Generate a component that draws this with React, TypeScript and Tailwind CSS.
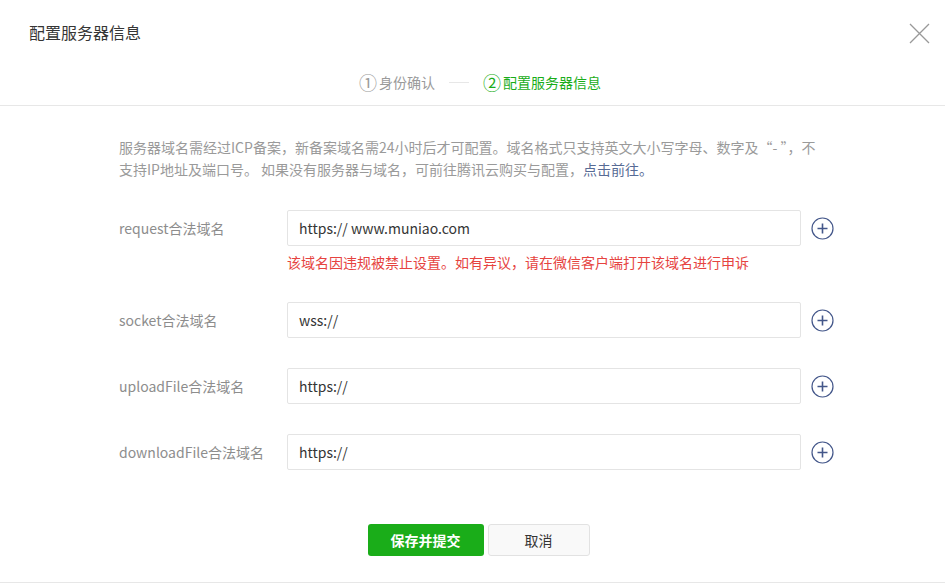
const font = { fontFamily: '"Noto Sans CJK SC", "Noto Sans", sans-serif' };

type Row = {
  label: string;
  value: string;
  error?: string;
};

const rows: Row[] = [
  {
    label: "request合法域名",
    value: "https:// www.muniao.com",
    error: "该域名因违规被禁止设置。如有异议，请在微信客户端打开该域名进行申诉",
  },
  { label: "socket合法域名", value: "wss://" },
  { label: "uploadFile合法域名", value: "https://" },
  { label: "downloadFile合法域名", value: "https://" },
];

function PlusIcon() {
  return (
    <svg width="23" height="23" viewBox="0 0 23 23" fill="none" stroke="#44578a">
      <circle cx="11.5" cy="11.5" r="10.5" strokeWidth="1.2" />
      <path d="M11.5 6.5v10M6.5 11.5h10" strokeWidth="1.6" />
    </svg>
  );
}

function DomainRow({ label, value, error }: Row) {
  return (
    <div className="flex">
      <div className="w-[168px] shrink-0 h-[36px] flex items-center text-[14px] text-[#8d8d8d]">{label}</div>
      <div>
        <div className="flex items-center">
          <div className="w-[514px] shrink-0 h-[36px] border border-[#e4e4e4] rounded-[2px] flex items-center px-[11px] text-[14px] text-[#353535]">
            {value}
          </div>
          <div className="ml-[10px] shrink-0 flex items-center">
            <PlusIcon />
          </div>
        </div>
        {error && (
          <div className="mt-[6px] leading-[20px] text-[14px] text-[#e64340]">{error}</div>
        )}
      </div>
    </div>
  );
}

export default function App() {
  return (
    <div style={font} className="w-[945px] h-[583px] bg-white border-b border-[#e7e7e7] overflow-hidden">
      <div className="h-[64px] flex items-center justify-between pl-[29px] pr-[15px]">
        <span className="text-[16px] text-[#353535]">配置服务器信息</span>
        <svg width="21" height="21" viewBox="0 0 21 21" stroke="#999" strokeWidth="1.3" className="mt-[2px]">
          <path d="M1 1l19 19M20 1L1 20" />
        </svg>
      </div>

      <div className="h-[42px] border-b border-[#e7e7e7]">
        <div className="h-[36px] flex items-center justify-center text-[14px] pl-[15px]">
          <span className="text-[#9a9a9a] flex items-center">
            <span className="text-[18px] mr-[2px]">①</span>身份确认
          </span>
          <span className="w-[20px] h-px bg-[#e7e7e7] mx-[14px]" />
          <span className="text-[#1aad19] flex items-center">
            <span className="text-[18px] mr-[2px]">②</span>配置服务器信息
          </span>
        </div>
      </div>

      <div className="pl-[119px] pr-[100px] pt-[30px]">
        <p className="w-[708px] text-[14px] leading-[22px] text-[#9a9a9a]">
          服务器域名需经过ICP备案，新备案域名需24小时后才可配置。域名格式只支持英文大小写字母、数字及“- ”，不支持IP地址及端口号。 如果没有服务器与域名，可前往腾讯云购买与配置，
          <span className="text-[#576b95]">点击前往。</span>
        </p>

        <div className="mt-[30px] flex flex-col gap-[30px]">
          {rows.map((r) => (
            <DomainRow key={r.label} {...r} />
          ))}
        </div>
      </div>

      <div className="mt-[54px] flex justify-center gap-[4px] pl-[12px]">
        <button className="w-[116px] h-[32px] rounded-[3px] bg-[#1aad19] text-white text-[14px] font-bold">
          保存并提交
        </button>
        <button className="w-[102px] h-[32px] rounded-[3px] bg-[#f9f9f9] border border-[#e2e2e2] text-[#353535] text-[14px]">
          取消
        </button>
      </div>
    </div>
  );
}
